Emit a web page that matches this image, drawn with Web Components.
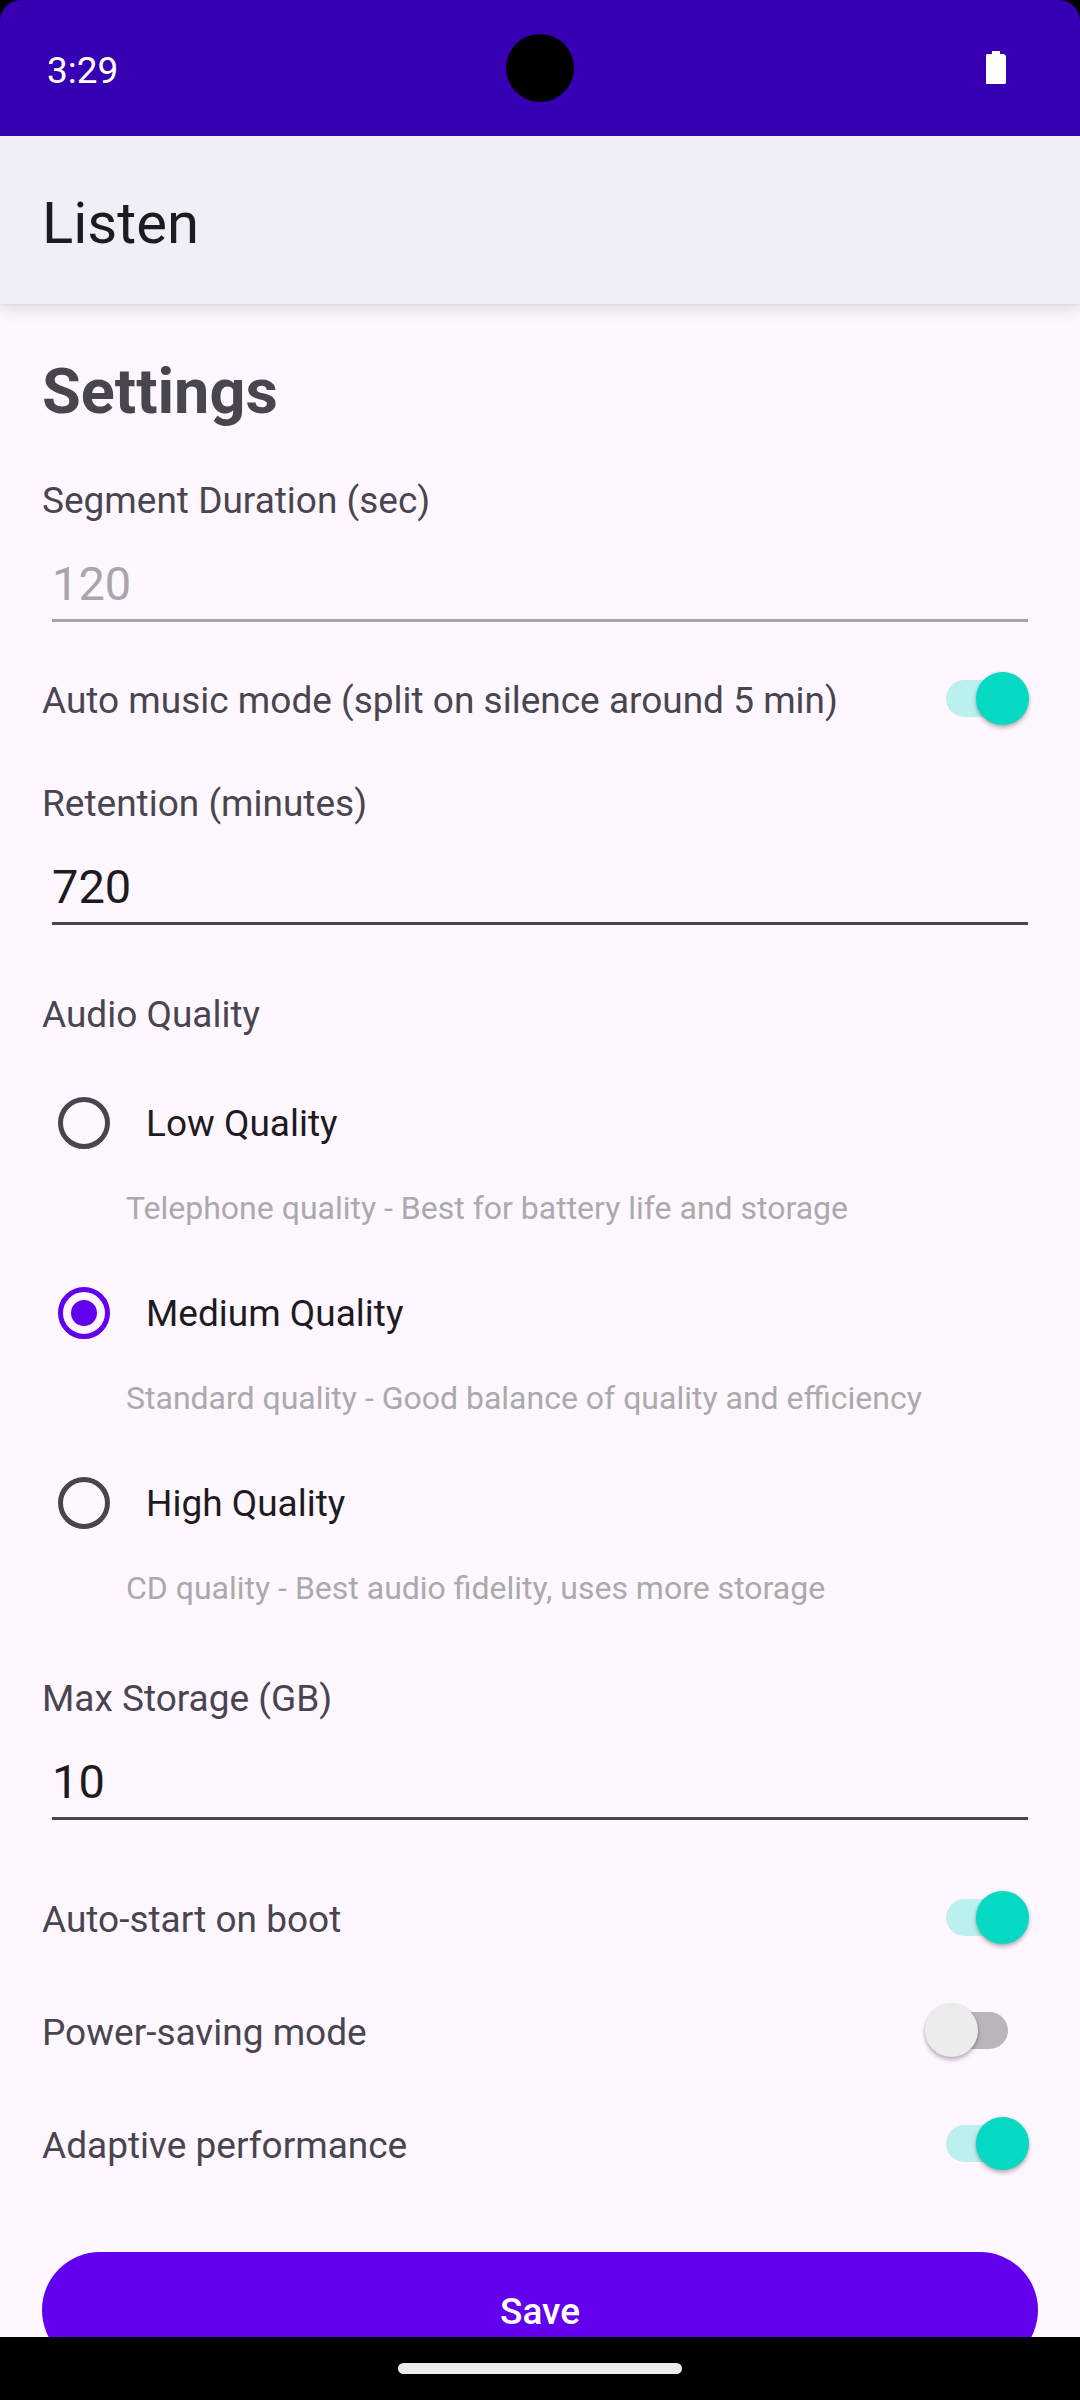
<!DOCTYPE html>
<html lang="en">
<head>
<meta charset="utf-8">
<meta name="viewport" content="width=device-width, initial-scale=1">
<title>Listen</title>
<style>
  :root {
    --primary: #6200ee;
    --primary-dark: #3700b3;
    --accent: #05d8c3;
    --surface: #fef7ff;
    --bar: #f3edf7;
    --text: #1d1b20;
    --text-soft: #49454f;
    --text-hint: #aaaaaa;
    --disabled: #aaa5ac;
  }
  html, body { height: 100%; }
  body {
    margin: 0;
    background: var(--surface);
    color: var(--text-soft);
    font: 37px/43px Roboto, sans-serif;
  }
</style>
</head>
<body>
<listen-app></listen-app>

<script>
const define = (name, html, setup) => {
  const template = document.createElement('template');
  template.innerHTML = html;
  customElements.define(name, class extends HTMLElement {
    constructor() {
      super();
      this.attachShadow({ mode: 'open' }).append(template.content.cloneNode(true));
    }
    connectedCallback() {
      if (setup && !this.ready) { this.ready = true; setup(this, this.shadowRoot); }
    }
  });
};

define('status-bar', `
  <style>
    :host { display: block; flex: none; background: #000; }
    .bar {
      display: grid; grid-template-columns: 1fr auto 1fr; align-items: center;
      height: 136px; box-sizing: border-box; padding: 0 47px;
      background: var(--primary-dark); border-radius: 21px 21px 0 0; color: #fff;
    }
    time { padding-top: 4px; }
    .camera { width: 68px; height: 68px; border-radius: 50%; background: #000; }
    svg { justify-self: end; margin-right: 27px; display: block; }
  </style>
  <div class="bar">
    <time>3:29</time>
    <span class="camera"></span>
    <svg width="20" height="34" viewBox="0 0 20 34" role="img" aria-label="Battery full">
      <path fill="#fff" d="M6 0h8v3h4l2 2v27l-1 1H0V4l1-1h5z"/>
    </svg>
  </div>`);

define('app-bar', `
  <style>
    :host {
      display: flex; align-items: center; flex: none; height: 168px; padding: 0 42px;
      background: var(--bar); color: var(--text); box-sizing: border-box;
      box-shadow: 0 4px 16px rgba(0,0,0,.14), 0 1px 2px rgba(0,0,0,.05);
    }
    h1 { margin: 0; padding-top: 6px; font-size: 58px; line-height: 68px; font-weight: 400; }
  </style>
  <h1><slot></slot></h1>`);

define('text-field', `
  <style>
    :host { display: flex; flex-direction: column; }
    input {
      margin: 0 10px; padding: 34px 0 7px; border: 0; border-bottom: 3px solid var(--text-soft);
      border-radius: 0; background: none; outline: none; min-width: 0; height: 56px;
      font: 47px/56px Roboto, sans-serif; color: var(--text);
    }
    input:disabled { color: var(--disabled); border-color: var(--disabled); }
  </style>
  <label for="field"><slot></slot></label>
  <input id="field" type="text" inputmode="numeric">`,
  (host, root) => {
    const input = root.querySelector('input');
    input.value = host.getAttribute('value');
    input.disabled = host.hasAttribute('disabled');
  });

define('switch-row', `
  <style>
    :host { display: flex; align-items: center; justify-content: space-between; gap: 24px; }
    label { flex: 1; padding-top: 4px; }
    input {
      appearance: none; flex: none; display: grid; align-items: center;
      width: 104px; height: 53px; margin: 0 9px 0 0;
    }
    input::before, input::after { content: ""; grid-area: 1 / 1; }
    input::before { height: 37px; margin: 0 21px; border-radius: 19px; background: #bab4bb; }
    input::after {
      width: 53px; height: 53px; border-radius: 50%; background: #ececec;
      box-shadow: 0 3px 4px rgba(0,0,0,.26), 0 0 3px rgba(0,0,0,.12);
    }
    input:checked::before { background: #bbf0ef; }
    input:checked::after { background: var(--accent); justify-self: end; }
  </style>
  <label for="toggle"><slot></slot></label>
  <input id="toggle" type="checkbox" role="switch">`,
  (host, root) => { root.querySelector('input').checked = host.hasAttribute('checked'); });

define('quality-picker', `
  <style>
    :host { display: block; }
    fieldset { margin: 0; padding: 0; border: 0; min-width: 0; }
    legend { padding: 0; margin-bottom: 60px; }
    .options { display: flex; flex-direction: column; gap: 59px; }
    .option { display: flex; align-items: center; gap: 36px; padding-left: 16px; height: 53px; }
    label { padding-top: 2px; color: var(--text); }
    input {
      appearance: none; flex: none; display: grid; place-items: center;
      width: 52px; height: 52px; box-sizing: border-box; margin: 0;
      border: 5px solid var(--text-soft); border-radius: 50%;
    }
    input:checked { border-color: var(--primary); }
    input:checked::before {
      content: ""; width: 26px; height: 26px; border-radius: 50%; background: var(--primary);
    }
    p { margin: 40px 0 0; padding-left: 84px; font-size: 32px; line-height: 38px; color: var(--text-hint); }
  </style>
  <fieldset>
    <legend>Audio Quality</legend>
    <div class="options">
      <div>
        <div class="option"><input type="radio" name="quality" id="low" aria-describedby="low-hint"><label for="low">Low Quality</label></div>
        <p id="low-hint">Telephone quality - Best for battery life and storage</p>
      </div>
      <div>
        <div class="option"><input type="radio" name="quality" id="medium" aria-describedby="medium-hint" checked><label for="medium">Medium Quality</label></div>
        <p id="medium-hint">Standard quality - Good balance of quality and efficiency</p>
      </div>
      <div>
        <div class="option"><input type="radio" name="quality" id="high" aria-describedby="high-hint"><label for="high">High Quality</label></div>
        <p id="high-hint">CD quality - Best audio fidelity, uses more storage</p>
      </div>
    </div>
  </fieldset>`);

define('action-button', `
  <style>
    :host { display: flex; }
    button {
      flex: 1; height: 116px; padding: 2px 0 0; border: 0; border-radius: 58px;
      background: var(--primary); color: #fff; font: 500 37px/43px Roboto, sans-serif;
    }
  </style>
  <button type="button"><slot></slot></button>`);

define('gesture-bar', `
  <style>
    :host { display: flex; flex: none; align-items: center; justify-content: center; height: 63px; background: #000; }
    span { width: 284px; height: 11px; border-radius: 6px; background: #ececec; }
  </style>
  <span></span>`);

define('listen-app', `
  <style>
    :host { display: flex; flex-direction: column; height: 100vh; overflow: hidden; }
    main {
      flex: 1; min-height: 0; overflow: hidden; padding: 51px 42px 0;
      display: flex; flex-direction: column;
    }
    main > * { flex: none; }
    h2 { margin: 0 0 50px; font-size: 63px; line-height: 74px; font-weight: 700; }
    .music { margin: 50px 0 57px; }
    quality-picker { margin: 68px 0 70px; }
    .switches { display: flex; flex-direction: column; gap: 60px; margin: 71px 0 82px; }
  </style>
  <status-bar></status-bar>
  <app-bar>Listen</app-bar>
  <main>
    <h2>Settings</h2>
    <text-field value="120" disabled>Segment Duration (sec)</text-field>
    <switch-row class="music" checked>Auto music mode (split on silence around 5 min)</switch-row>
    <text-field value="720">Retention (minutes)</text-field>
    <quality-picker></quality-picker>
    <text-field value="10">Max Storage (GB)</text-field>
    <div class="switches">
      <switch-row checked>Auto-start on boot</switch-row>
      <switch-row>Power-saving mode</switch-row>
      <switch-row checked>Adaptive performance</switch-row>
    </div>
    <action-button>Save</action-button>
  </main>
  <gesture-bar></gesture-bar>`);
</script>
</body>
</html>
